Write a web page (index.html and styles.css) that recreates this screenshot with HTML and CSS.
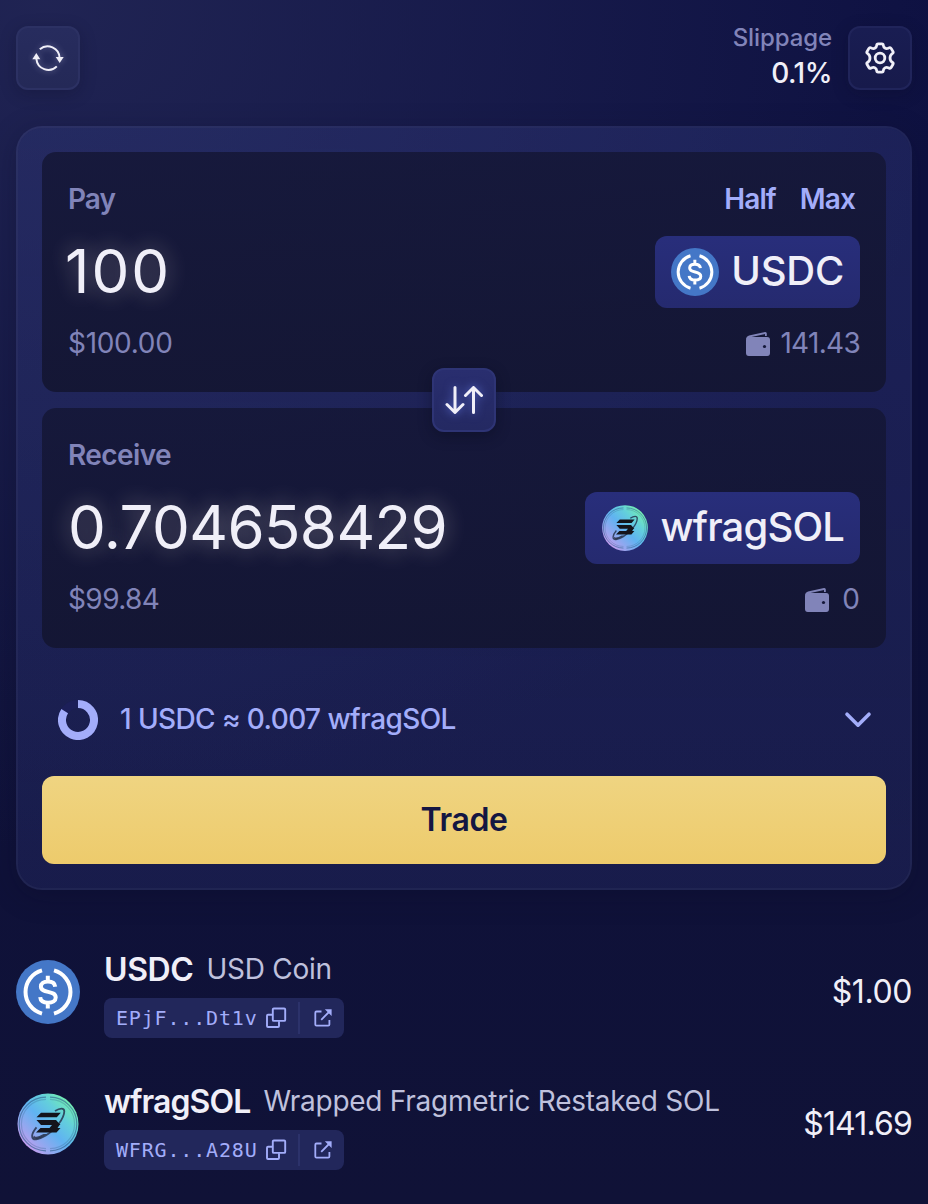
FILE: index.html
```html
<!DOCTYPE html>
<html lang="en">
<head>
<meta charset="utf-8">
<title>Swap</title>
<link rel="stylesheet" href="styles.css">
</head>
<body>
<svg class="defs" width="0" height="0" aria-hidden="true">
  <defs>
    <linearGradient id="coin" x1="0.1" y1="0.9" x2="0.88" y2="0.15">
      <stop offset="0" stop-color="#d59af0"/><stop offset=".2" stop-color="#9da5ef"/><stop offset=".5" stop-color="#60b3f1"/><stop offset=".75" stop-color="#63cfdc"/><stop offset="1" stop-color="#74efb0"/>
    </linearGradient>
    <symbol id="usdc" viewBox="0 0 64 64">
      <circle cx="32" cy="32" r="32" fill="#4477c7"/>
      <g fill="none" stroke="#fff" stroke-width="4">
        <path d="M26 10.4a22.4 22.4 0 0 0 0 43.2M38 10.4a22.4 22.4 0 0 1 0 43.2"/>
        <path d="M39.2 26.8c-.3-3.2-3-5.2-7.3-5.2-4.2 0-7 2-7 5 0 7.6 14.8 3 14.8 11 0 3.2-3.1 5.2-7.6 5.2-4.6 0-7.6-2.1-7.9-5.6M31.800 15.800v5.600M31.800 43v5.600"/>
      </g>
    </symbol>
    <symbol id="wfrag" viewBox="0 0 64 64">
      <circle cx="32" cy="32" r="30.500" fill="url(#coin)"/>
      <g fill="none" stroke="#33628e" stroke-opacity=".65" stroke-width="1.200">
        <path d="M30 5.200a26.800 26.800 0 0 0 0 53.600M34 5.200a26.800 26.800 0 0 1 0 53.600"/>
        <path d="M30 7.400a24.600 24.600 0 0 0 0 49.200M34 7.400a24.600 24.600 0 0 1 0 49.200" stroke-opacity=".3"/>
      </g>
      <path d="M39 19c5-3.200 9.300-3.400 9.300.3-.1 6.700-8 18-18.500 24.200-7.200 4.300-14 5.800-13.700.4.200-2.600 1.900-5.600 4.400-8.600" fill="none" stroke="#26344f" stroke-opacity=".85" stroke-width="1.800"/>
      <path d="M17 45.500c2.500 3.200 8 .5 14-3.500h-3.500c-4.500 2.500-8.500 3.800-9.500 1.500" fill="#20283b" opacity=".8"/>
      <path d="M25 20.800h19.800l-4 4.400H20.500zM20.500 28h19.500l4.500 5H25zM24.500 36H44.500l-4 4.500H20zM36 33h7.500l-2 3h-8z" fill="#14141b"/>
    </symbol>
    <symbol id="wallet" viewBox="0 0 24 24">
      <path d="M2.800 5H21.200Q24 5 24 8V21Q24 24 21.200 24H2.800Q0 24 0 21V8Q0 5 2.800 5Z"/>
      <path d="M0 7Q.4 4.200 3 3.600L19 .1Q20.800-.1 20.800 1.600V4H19V2L5.500 5Z"/>
      <circle cx="18.500" cy="14.500" r="1.600" fill="#15183a"/>
    </symbol>
    <symbol id="copy" viewBox="0 0 22 22">
      <g fill="none" stroke="currentColor" stroke-width="1.900" stroke-linejoin="round"><rect x="7.800" y="1.500" width="12.400" height="12.400" rx="1"/><path d="M7.600 7.700H3a1 1 0 0 0-1 1V19a1 1 0 0 0 1 1H13a1 1 0 0 0 1-1V14.300"/></g>
    </symbol>
    <symbol id="external" viewBox="0 0 20 20">
      <path d="M8.500 3.500H3.500a1.200 1.200 0 0 0-1.200 1.200V16.500a1.200 1.200 0 0 0 1.200 1.200H15.200a1.200 1.200 0 0 0 1.200-1.200V12M8.200 11.800 17 3" fill="none" stroke="currentColor" stroke-width="1.800"/>
      <path d="M11.800 1.200H18.600V8z" fill="currentColor"/>
    </symbol>
  </defs>
</svg>
<main class="app">
  <header class="toolbar">
    <button class="tool" aria-label="Refresh">
      <svg class="glow" width="32" height="28" viewBox="0 0 32 28" fill="none" stroke="#f0eff8" stroke-width="2"><path d="M7.800 5.200A12 12 0 0 1 27.600 14M24.800 22.400A12 12 0 0 1 4.400 15"/><path d="M.3 15.200 4.300 9l4 6.200zM23.700 13h8l-4 6z" fill="#f0eff8" stroke="none"/></svg>
    </button>
    <div class="tool-right">
      <div class="slippage"><span class="slip-label">Slippage</span><span class="slip-value">0.1%</span></div>
      <button class="tool tool-dark" aria-label="Settings">
        <svg width="34" height="34" viewBox="0 0 34 34" fill="none" stroke="#f0eff8" stroke-width="2.800" stroke-linejoin="round"><path d="M15.200 2.800h3.600a1.500 1.500 0 0 1 1.500 1.500c.3 2.500 2.500 3.900 4.900 2.900l1-.4a1.500 1.500 0 0 1 1.900.6l1.800 3a1.500 1.500 0 0 1-.4 2c-3.300 2.200-3.300 6.900 0 9.100a1.500 1.500 0 0 1 .4 2l-1.800 3a1.500 1.500 0 0 1-1.900.6l-1-.4c-2.400-1-4.600.4-4.900 2.900a1.500 1.500 0 0 1-1.500 1.500h-3.600a1.500 1.500 0 0 1-1.500-1.500c-.3-2.500-2.500-3.900-4.900-2.900l-1 .4a1.500 1.500 0 0 1-1.900-.6l-1.800-3a1.500 1.500 0 0 1 .4-2c3.300-2.200 3.300-6.900 0-9.100a1.500 1.500 0 0 1-.4-2l1.800-3a1.500 1.500 0 0 1 1.900-.6l1 .4c2.400 1 4.600-.4 4.900-2.900a1.500 1.500 0 0 1 1.500-1.500z"/><circle cx="17" cy="17" r="4.800"/></svg>
      </button>
    </div>
  </header>

  <section class="swap">
    <div class="panel">
      <div class="line"><span class="label">Pay</span><span class="shortcuts"><b class="half">Half</b><b class="max">Max</b></span></div>
      <div class="line main-line"><span class="amount pay-amount">100</span><button class="token"><svg width="48" height="48"><use href="#usdc"/></svg><span class="token-usdc">USDC</span></button></div>
      <div class="line muted"><span class="fiat-pay">$100.00</span><span class="balance"><svg width="24" height="24" fill="#8184b9"><use href="#wallet"/></svg><span class="bal-pay">141.43</span></span></div>
      <button class="flip" aria-label="Switch tokens"><svg class="glow-blue" width="38" height="28" viewBox="0 0 38 28" fill="none" stroke="#f0eff8" stroke-width="3" stroke-linecap="round" stroke-linejoin="round"><path d="M10 1.500V26M2 18.500l8 8 8-8M28.500 26.500V2M20.500 9.500l8-8 8 8"/></svg></button>
    </div>
    <div class="panel">
      <div class="line"><span class="label label-receive">Receive</span></div>
      <div class="line main-line"><span class="amount receive-amount">0.704658429</span><button class="token"><svg width="48" height="48"><use href="#wfrag"/></svg><span class="token-wfrag">wfragSOL</span></button></div>
      <div class="line muted"><span class="fiat-receive">$99.84</span><span class="balance"><svg width="24" height="24" fill="#8184b9"><use href="#wallet"/></svg><span class="bal-receive">0</span></span></div>
    </div>
    <div class="rate">
      <svg width="40" height="40" viewBox="0 0 40 40" fill="none" stroke-width="8"><circle cx="20" cy="20" r="16" stroke="#1c1f59"/><path d="M20 4A16 16 0 1 1 6.700 11.100" stroke="#a3adfa"/></svg>
      <span class="rate-text">1 USDC ≈ 0.007 wfragSOL</span>
      <svg class="chevron" width="28" height="18" viewBox="0 0 28 18" fill="none" stroke="#a3adfa" stroke-width="3.600" stroke-linecap="round" stroke-linejoin="round"><path d="M3 3.200 14 14.200 25 3.200"/></svg>
    </div>
    <button class="trade"><span>Trade</span></button>
  </section>

  <section class="tokens">
    <article class="item">
      <svg width="64" height="64"><use href="#usdc"/></svg>
      <div class="info">
        <div class="name"><strong class="sym-usdc">USDC</strong><span class="full-name">USD Coin</span></div>
        <div class="chip"><code class="addr">EPjF...Dt1v</code><svg class="copy" width="22" height="22"><use href="#copy"/></svg><i class="sep"></i><svg width="20" height="20"><use href="#external"/></svg></div>
      </div>
      <span class="price price-usdc">$1.00</span>
    </article>
    <article class="item">
      <svg width="64" height="64"><use href="#wfrag"/></svg>
      <div class="info">
        <div class="name"><strong class="sym-wfrag">wfragSOL</strong><span class="full-name">Wrapped Fragmetric Restaked SOL</span></div>
        <div class="chip"><code class="addr">WFRG...A28U</code><svg class="copy" width="22" height="22"><use href="#copy"/></svg><i class="sep"></i><svg width="20" height="20"><use href="#external"/></svg></div>
      </div>
      <span class="price price-wfrag">$141.69</span>
    </article>
  </section>
</main>
</body>
</html>
```
FILE: styles.css
```css
* { box-sizing: border-box; }
body {
  margin: 0;
  height: 1204px;
  overflow: hidden;
  font-family: Inter, "Liberation Sans", sans-serif;
  color: #f0eff8;
  background:
    radial-gradient(ellipse 900px 850px at 5% 0%, rgba(37, 41, 88, .78), rgba(24, 28, 72, 0)),
    linear-gradient(180deg, #0e1142 0%, #0e113b 45%, #101237 100%);
}
button { font: inherit; color: inherit; border: 0; padding: 0; }
svg { display: block; flex: none; }
span, strong, b { white-space: nowrap; }
.defs { position: absolute; }
.app { padding: 26px 16px 0; }
.toolbar, .tool-right, .line, .balance, .shortcuts, .token, .rate, .item, .name, .chip { display: flex; align-items: center; }
.toolbar { height: 64px; justify-content: space-between; }
.tool {
  width: 64px;
  height: 64px;
  display: grid;
  place-items: center;
  border: 2px solid #2c3163;
  border-radius: 12px;
  background: linear-gradient(#272c5e, #242957);
  box-shadow: 0 4px 16px rgba(10, 12, 35, .25);
}
.tool-dark { background: linear-gradient(#191d52, #171a4b); border-color: #20245a; }
.glow { filter: drop-shadow(0 0 3px rgba(220, 220, 255, .4)); }
.glow-blue { filter: drop-shadow(0 0 5px rgba(110, 135, 255, .65)); }
.tool-right { gap: 16px; }
.slippage { display: flex; flex-direction: column; align-items: flex-end; }
.slip-label { font-size: 24px; line-height: 35px; font-weight: 500; letter-spacing: -.1px; color: #8184b9; margin-top: -5px; }
.slip-value { font-size: 28px; line-height: 36px; font-weight: 500; letter-spacing: -.500px; }
.swap {
  margin-top: 36px;
  height: 764px;
  padding: 24px;
  border: 2px solid rgba(95, 105, 175, .22);
  border-radius: 26px;
  background: linear-gradient(rgba(46, 54, 118, .45), rgba(40, 46, 106, .38));
  background-clip: padding-box;
  box-shadow: 0 6px 28px rgba(10, 12, 35, .25);
}
.panel {
  position: relative;
  height: 240px;
  padding: 28px 26px;
  display: grid;
  grid-template-rows: 40px 72px 40px;
  gap: 16px;
  border-radius: 14px;
  background: linear-gradient(rgba(20, 22, 53, .84), rgba(19, 21, 49, .9));
}
.panel + .panel { margin-top: 16px; }
.line { justify-content: space-between; font-size: 28px; line-height: 40px; }
.label, .shortcuts, .amount, .token span, .muted > span, .rate-text, .trade span, .name, .price { padding-bottom: 2px; }
.label { font-weight: 600; letter-spacing: -1px; color: #8184b9; }
.label-receive { letter-spacing: -.600px; }
.shortcuts { gap: 24px; padding-right: 5px; color: #a3adfa; }
.shortcuts b { font-weight: 600; letter-spacing: -.9px; }
.amount { font-size: 60px; line-height: 72px; text-shadow: 0 0 22px rgba(255, 245, 235, .38); }
.pay-amount { margin-left: -3px; letter-spacing: 2px; }
.receive-amount { letter-spacing: -.600px; }
.token {
  height: 72px;
  padding: 0 16px;
  gap: 12px;
  border-radius: 12px;
  background: linear-gradient(#282e7b, #252a6f);
  font-size: 40px;
  font-weight: 500;
}
.token-usdc { letter-spacing: -.25px; }
.token-wfrag { letter-spacing: -.85px; }
.muted { color: #8184b9; }
.fiat-pay { letter-spacing: -.3px; }
.fiat-receive { letter-spacing: -.6px; }
.bal-pay { letter-spacing: -.7px; }
.bal-receive { margin-left: 3px; }
.balance { gap: 10px; }
.balance svg { margin-top: 1px; overflow: visible; }
.flip {
  position: absolute;
  left: 390px;
  top: 216px;
  z-index: 2;
  width: 64px;
  height: 64px;
  display: grid;
  place-items: center;
  border: 2px solid #2e3475;
  border-radius: 12px;
  background: linear-gradient(#292e6f, #242962);
  box-shadow: 0 4px 14px rgba(8, 10, 32, .45);
}
.rate { height: 40px; margin: 52px 14px 36px 16px; font-size: 28px; font-weight: 500; color: #a3adfa; }
.rate-text { margin-left: 22px; letter-spacing: -.6px; }
.chevron { margin-left: auto; }
.trade {
  width: 100%;
  height: 88px;
  border-radius: 12px;
  background: linear-gradient(#efd481, #edcb6c);
  color: #141642;
  font-size: 32px;
  font-weight: 600;
  letter-spacing: -.4px;
}
.trade span { display: block; }
.tokens { margin-top: 56px; display: grid; gap: 40px; }
.item { height: 92px; gap: 24px; }
.info { display: grid; gap: 4px; justify-items: start; }
.name { height: 48px; gap: 13px; font-size: 28px; color: #bfc1dd; }
.name strong { font-size: 32px; font-weight: 600; color: #f0eff8; }
.sym-usdc { letter-spacing: -.4px; }
.sym-wfrag { letter-spacing: -.9px; }
.full-name { letter-spacing: -.26px; }
.chip { width: 240px; height: 40px; padding-left: 12px; border-radius: 8px; background: #22275b; color: #a3adfa; }
.addr { width: 142px; font-family: "DejaVu Sans Mono", monospace; font-size: 20px; letter-spacing: .83px; line-height: 40px; }
.copy { margin-left: 7px; }
.sep { width: 2px; height: 32px; margin: 0 13px 0 11px; background: #2c326b; }
.price { margin-left: auto; font-size: 32px; }
.price-usdc { letter-spacing: -.4px; }
.price-wfrag { letter-spacing: -.85px; }
```
